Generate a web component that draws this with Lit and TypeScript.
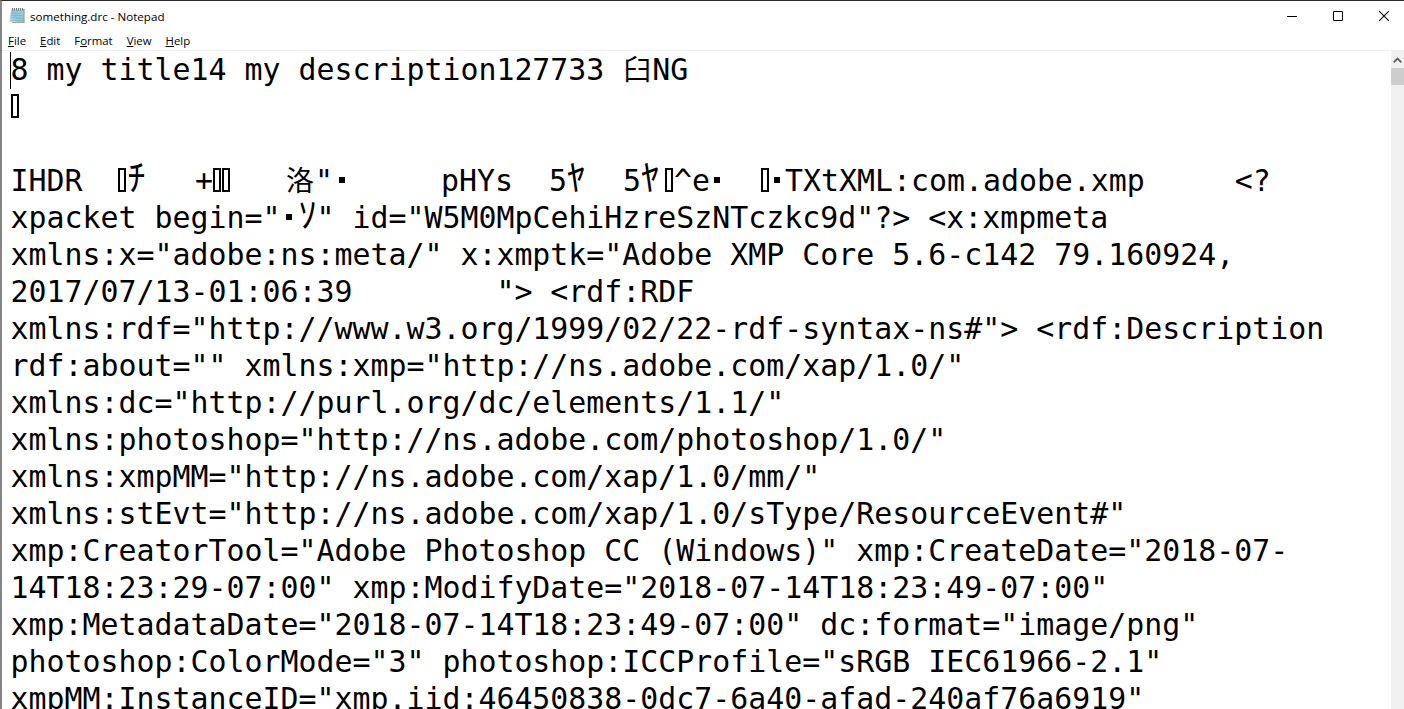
import { LitElement, html, css } from "lit";
import { customElement } from "lit/decorators.js";

const T = html`<span class="tofu"></span>`;

@customElement("app-root")
export class AppRoot extends LitElement {
  static styles = css`
    :host { display: block; height: 709px; overflow: hidden; background: #fff; }
    .win { height: 709px; display: flex; flex-direction: column; border-top: 1px solid #2b2b2b; border-left: 2px solid #858585; box-sizing: border-box; overflow: hidden; }
    .title { height: 30px; flex: none; display: flex; align-items: center; font: 11.6px "Open Sans", sans-serif; color: #000; padding-left: 6px; }
    .title svg.app { width: 18px; height: 18px; margin-right: 4px; }
    .title .name { flex: 1; }
    .controls { display: flex; margin-right: -3px; }
    .controls div { width: 46px; height: 30px; display: flex; align-items: center; justify-content: center; }
    .menu { height: 19px; flex: none; display: flex; gap: 14px; padding-left: 6px; font: 11.4px "Open Sans", sans-serif; color: #000; align-items: center; border-bottom: 1px solid #f0f0f0; }
    .body { flex: 1; display: flex; min-height: 0; }
    .edit { flex: 1; min-width: 0; overflow: hidden; padding-left: 8.5px; font: 29.9px/37px "DejaVu Sans Mono", "Noto Sans CJK JP", monospace; color: #000; position: relative; }
    .line { height: 37px; white-space: pre; }
    .caret { position: absolute; left: 8px; top: 1px; width: 1px; height: 37px; background: #000; }
    .tofu { display: inline-block; width: 8px; height: 24px; border: 2px solid #000; box-sizing: border-box; margin-right: 1px; vertical-align: -1px; }
    .cjk { font-family: "Noto Sans CJK JP", sans-serif; font-size: 28px; display: inline-block; width: 30px; text-align: center; line-height: 0; }
    .kana { font-family: "Noto Sans CJK JP", sans-serif; font-size: 36px; display: inline-block; width: 18px; text-align: center; line-height: 0; }
    .dot { display: inline-block; width: 18px; text-align: center; line-height: 0; }
    .dot.s15 { width: 15px; }
    .dot::before { content: ""; display: inline-block; width: 6px; height: 6px; background: #000; vertical-align: 8px; }
    .g { display: inline-block; }
    .g13 { width: 13.5px; }
    .g6 { width: 6px; }
    .g2 { width: 2px; }
    .scroll { width: 13px; flex: none; background: #f0f0f0; display: flex; flex-direction: column; }
    .arrow { height: 17px; display: flex; align-items: center; justify-content: center; }
    .thumb { height: 17px; background: #cdcdcd; }
  `;

  render() {
    return html`<div class="win">
      <div class="title">
        <svg class="app" viewBox="0 0 18 18">
          <defs>
            <linearGradient id="pad" x1="0" y1="1" x2="1" y2="0">
              <stop offset="0" stop-color="#c4e6ee"/>
              <stop offset=".45" stop-color="#8cc4d8"/>
              <stop offset="1" stop-color="#a9d2e2"/>
            </linearGradient>
          </defs>
          <path d="M15 2h1.6v14H4v-1h11z" fill="#a89a74"/>
          <path d="M3.4 2.5H15.4V15.2H1z" fill="url(#pad)"/>
          <path d="M4 6h10.6M3.6 8.5h11M3.2 11h11.4M2.8 13.5h11.8" stroke="#73aec6" stroke-width=".7" opacity=".7"/>
          <path d="M4.5 1v2.6M6.5 1v2.6M8.5 1v2.6M10.5 1v2.6M12.5 1v2.6M14.5 1v2.6" stroke="#4f6470" stroke-width=".9"/>
        </svg>
        <span class="name">something.drc - Notepad</span>
        <div class="controls">
          <div><svg width="10" height="10" viewBox="0 0 10 10"><path d="M0 5.5h10" stroke="#000"/></svg></div>
          <div><svg width="10" height="10" viewBox="0 0 10 10"><path d="M.5.5h9v9h-9z" fill="none" stroke="#000"/></svg></div>
          <div><svg width="10" height="10" viewBox="0 0 10 10"><path d="M0 0l10 10M10 0L0 10" stroke="#000" stroke-width="1.05"/></svg></div>
        </div>
      </div>
      <div class="menu">
        <span><u>F</u>ile</span><span><u>E</u>dit</span><span>F<u>o</u>rmat</span><span><u>V</u>iew</span><span><u>H</u>elp</span>
      </div>
      <div class="body">
        <div class="edit">
          <div class="caret"></div>
          <div class="line">8 my title14 my description127733 <span class="cjk">臼</span>NG</div>
          <div class="line">${T}</div>
          <div class="line"></div>
          <div class="line">IHDR  ${T}<span class="kana">ﾁ</span>  <span class="g g13"></span>+${T}${T}   <span class="cjk">洛</span>"<span class="dot"></span>     pHYs  5<span class="kana">ﾔ</span><span class="g g2"></span>  5<span class="kana">ﾔ</span><span class="g g6"></span>${T}^e<span class="dot s15"></span>  ${T}<span class="dot s15"></span>TXtXML:com.adobe.xmp     &lt;?</div>
          <div class="line">xpacket begin="<span class="dot"></span><span class="kana">ｿ</span>" id="W5M0MpCehiHzreSzNTczkc9d"?&gt; &lt;x:xmpmeta</div>
          <div class="line">xmlns:x="adobe:ns:meta/" x:xmptk="Adobe XMP Core 5.6-c142 79.160924,</div>
          <div class="line">2017/07/13-01:06:39        "&gt; &lt;rdf:RDF</div>
          <div class="line">xmlns:rdf="http://www.w3.org/1999/02/22-rdf-syntax-ns#"&gt; &lt;rdf:Description</div>
          <div class="line">rdf:about="" xmlns:xmp="http://ns.adobe.com/xap/1.0/"</div>
          <div class="line">xmlns:dc="http://purl.org/dc/elements/1.1/"</div>
          <div class="line">xmlns:photoshop="http://ns.adobe.com/photoshop/1.0/"</div>
          <div class="line">xmlns:xmpMM="http://ns.adobe.com/xap/1.0/mm/"</div>
          <div class="line">xmlns:stEvt="http://ns.adobe.com/xap/1.0/sType/ResourceEvent#"</div>
          <div class="line">xmp:CreatorTool="Adobe Photoshop CC (Windows)" xmp:CreateDate="2018-07-</div>
          <div class="line">14T18:23:29-07:00" xmp:ModifyDate="2018-07-14T18:23:49-07:00"</div>
          <div class="line">xmp:MetadataDate="2018-07-14T18:23:49-07:00" dc:format="image/png"</div>
          <div class="line">photoshop:ColorMode="3" photoshop:ICCProfile="sRGB IEC61966-2.1"</div>
          <div class="line">xmpMM:InstanceID="xmp.iid:46450838-0dc7-6a40-afad-240af76a6919"</div>
        </div>
        <div class="scroll">
          <div class="arrow"><svg width="9" height="6" viewBox="0 0 9 6"><path d="M.7 5.3L4.5 1.5l3.8 3.8" fill="none" stroke="#606060" stroke-width="1.8"/></svg></div>
          <div class="thumb"></div>
        </div>
      </div>
    </div>`;
  }
}
